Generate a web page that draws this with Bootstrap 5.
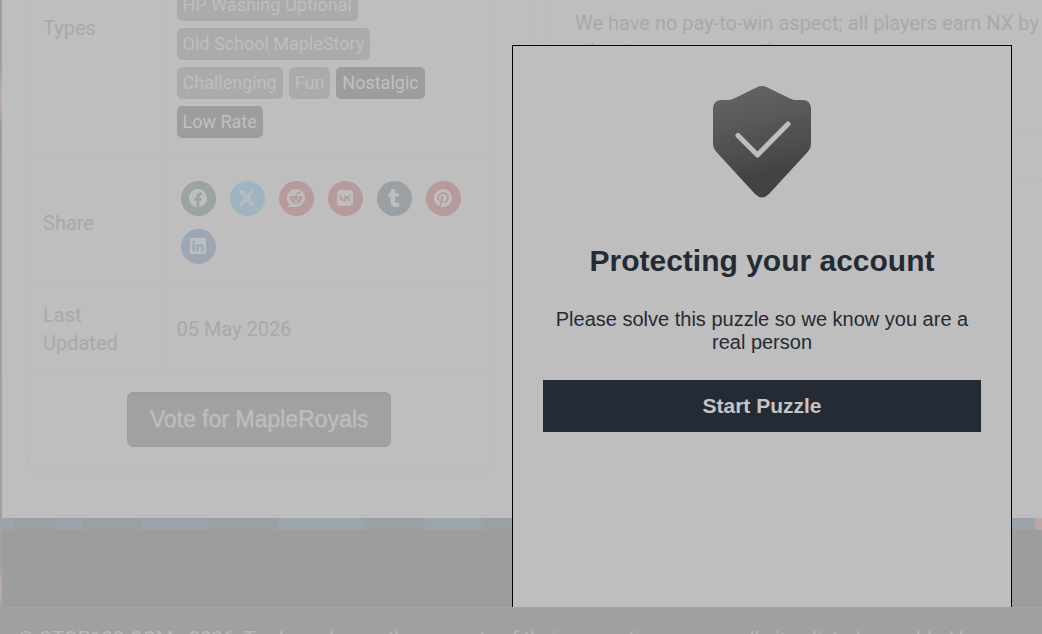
<!DOCTYPE html>
<html lang="en">
<head>
<meta charset="utf-8">
<meta name="viewport" content="width=device-width, initial-scale=1">
<title>MapleRoyals - Vote</title>
<link href="https://cdn.jsdelivr.net/npm/bootstrap@5.3.0/dist/css/bootstrap.min.css" rel="stylesheet">
<style>
body{font-family:Roboto,"Liberation Sans",sans-serif;font-size:20px;line-height:28px;color:#a9a9a9;
 background:#9ba4a8 linear-gradient(180deg,#9d9d9d 0,#9ba3a6 70px,#bba9a9 90px,#bba9a9 108px,#989fa3 125px,#9ba5a9 570px,#bba9a9 580px,#bba9a9 594px,#9ba4a8 610px)}
.shell{margin-left:2px}
.viewer{height:100vh}
.panel{background:#bebebe;padding:0 0 50px 25px}
.scrolled{margin-top:-102px}
.side{width:464px;border:1px solid #bababa;border-top:0;border-radius:0 0 8px 8px;box-shadow:0 5px 0 -1px #bebebe,0 5px 0 0 #bababa}
.facts{width:100%;border-collapse:collapse}
.facts th,.facts td{border:1px solid #bababa;border-left:0;padding:14px;font-weight:400}
.facts th{width:135px;padding-left:15px}
.facts td:last-child{border-right:0;padding-left:13px}
.facts .types > *{height:261px;border-top:0}
.facts .types td{vertical-align:bottom;padding-bottom:21px}
.tag{font-size:18px;line-height:24px;padding:4px 6px;border-radius:5px;background:#ababab;color:#bebebe;font-weight:400;text-decoration:none}
.tag-strong{background:#9d9d9d;color:#c0c0c0}
.tags{gap:7px 6px}
.share{gap:13px 14px;padding:7px 4px 8px}
.share a{width:35px;height:35px}
.share svg{width:18px;height:18px;display:block}
.vote{margin:20px 0;height:55px;width:264px;border:1px solid #9d9f9e;border-radius:6px;background:#a0a2a1;color:#bebebe;font-family:"Liberation Sans",Arial,sans-serif;font-size:23px;text-shadow:1px 1px 1px #acacac;box-shadow:inset 0 2px 0 #9b9e9d}
.about{margin-left:37px;border-left:1px solid #bababa;padding-left:19px;height:280px;border-bottom:1px solid #bababa;box-shadow:0 4px 0 -1px #bebebe,0 4px 0 0 #bababa}
.about-body{border-left:1px solid #bcbcbc;border-bottom:1px solid #bababa;padding:111px 0 0 26px;height:236px}
.strip{height:12px;background:linear-gradient(90deg,#9ba3ac 0 12px,#9aa1a3 12px 55px,#9ba3ac 55px 80px,#99a1a2 80px 140px,#9ba3ac 140px 205px,#99a1a3 205px 276px,#9aa6ac 276px 363px,#99a1a3 363px 423px,#9aa6ac 423px 481px,#99a1a3 481px 530px,#9aa4a9 530px 1032px,#bba9a9 1034px)}
.foot{background:#9d9d9d}
.notice{height:27px;background:#a0a0a0;border-top:1px solid #a4a4a4;padding:17px 16px 0;color:#b8b8b8}
.guard{position:absolute;top:45px;right:30px;bottom:27px;width:500px;border:1px solid #000;border-bottom:0;background:#bebebe;color:#242b35;font-family:"Liberation Sans",Arial,sans-serif;padding:40px 30px 0}
.guard h1{font-size:30px;line-height:36px;font-weight:700;margin:45px 0 29px}
.guard p{font-size:20px;line-height:23px;margin:0 0 26px}
.guard button{height:52px;border:0;background:#242b35;color:#c4c4c4;font-size:21px;font-weight:700}
</style>
</head>
<body>
<div class="shell viewer d-flex flex-column overflow-hidden">
<main class="panel flex-shrink-0 overflow-hidden">
 <div class="scrolled d-flex align-items-start">
  <section class="side flex-shrink-0 text-center">
   <table class="facts text-start">
    <tr class="types"><th scope="row">Types</th><td>
     <div class="tags d-flex flex-wrap">
      <a href="#" class="tag">HP Washing Optional</a><a href="#" class="tag">Old School MapleStory</a><a href="#" class="tag">Challenging</a><a href="#" class="tag">Fun</a><a href="#" class="tag tag-strong">Nostalgic</a><a href="#" class="tag tag-strong">Low Rate</a>
     </div></td></tr>
    <tr><th scope="row">Share</th><td>
     <div class="share d-flex flex-wrap">
      <a href="#" aria-label="Facebook" class="rounded-circle d-flex align-items-center justify-content-center" style="background:#9ba3a5"><svg viewBox="0 0 16 16" fill="#bebebe"><path d="M16 8.049c0-4.446-3.582-8.05-8-8.05C3.58 0-.002 3.603-.002 8.05c0 4.017 2.926 7.347 6.75 7.951v-5.625h-2.03V8.05H6.75V6.275c0-2.017 1.195-3.131 3.022-3.131.876 0 1.791.157 1.791.157v1.98h-1.009c-.993 0-1.303.621-1.303 1.258v1.51h2.218l-.354 2.326H9.25V16c3.824-.604 6.75-3.934 6.75-7.951"/></svg></a>
      <a href="#" aria-label="X" class="rounded-circle d-flex align-items-center justify-content-center" style="background:#9fb3c0"><svg viewBox="-1 -1 18 18" fill="#bebebe" stroke="#bebebe" stroke-width=".4"><path d="M12.600.75h2.454l-5.360 6.142L16 15.250h-4.937l-3.867-5.070-4.425 5.070H.316l5.733-6.570L0 .75h5.063l3.495 4.633L12.601.75Zm-.86 13.028h1.360L4.323 2.145H2.865z"/></svg></a>
      <a href="#" aria-label="Reddit" class="rounded-circle d-flex align-items-center justify-content-center" style="background:#b79a9c"><svg viewBox="0 0 18 18"><path fill="#bebebe" d="M9 0a9 9 0 1 1 0 18H1q-.7-.2-.2-.8l1.800-1.800A9 9 0 0 1 9 0Z"/><circle cx="3.900" cy="8.600" r="1.600" fill="#b79a9c"/><circle cx="14.100" cy="8.600" r="1.600" fill="#b79a9c"/><ellipse cx="9" cy="10.600" rx="5.400" ry="4.100" fill="#b79a9c"/><g fill="#bebebe"><circle cx="6.700" cy="9.600" r="1.100"/><circle cx="11.300" cy="9.600" r="1.100"/><path d="M6.500 12q2.500-.6 5 0-.6 1.700-2.500 1.700T6.500 12Z"/></g><path d="M9 6.500q.1-2.500 2.300-2.800" fill="none" stroke="#b79a9c"/><circle cx="12.200" cy="3.900" r="1.400" fill="#b79a9c"/></svg></a>
      <a href="#" aria-label="VK" class="rounded-circle d-flex align-items-center justify-content-center" style="background:#b79a9c"><svg viewBox="0 0 18 18"><rect x="1" y="1" width="16" height="16" rx="4" fill="#bebebe"/><path fill="none" stroke="#b79a9c" stroke-width="1.600" d="M4 6q.4 5.600 5.200 5.700V6M14 6q-.8 2.400-4.500 2.800 3.200.4 4.800 3.200"/></svg></a>
      <a href="#" aria-label="Tumblr" class="rounded-circle d-flex align-items-center justify-content-center" style="background:#9ba0a4"><svg viewBox="0 0 18 18" fill="#bebebe"><path d="M6.300 0H10v4.200h3.800v3.600H10V12q0 2.200 1.800 2.200 1 0 2-.4l1 3.200q-1.500 1-4.200 1-5-.1-5-4.800V7.800H3.300V4.800Q6 3.700 6.300 0Z"/></svg></a>
      <a href="#" aria-label="Pinterest" class="rounded-circle d-flex align-items-center justify-content-center" style="background:#b79a9c"><svg viewBox="0 0 16 16" fill="#bebebe"><path d="M8 0a8 8 0 0 0-2.915 15.452c-.07-.633-.134-1.606.027-2.297.146-.625.938-3.977.938-3.977s-.239-.479-.239-1.187c0-1.113.645-1.943 1.448-1.943.682 0 1.012.512 1.012 1.127 0 .686-.437 1.712-.663 2.663-.188.796.4 1.446 1.185 1.446 1.422 0 2.515-1.500 2.515-3.664 0-1.915-1.377-3.254-3.342-3.254-2.276 0-3.612 1.707-3.612 3.471 0 .688.265 1.425.595 1.826a.24.24 0 0 1 .056.230c-.061.252-.196.796-.222.907-.035.146-.116.177-.268.107-1-.465-1.624-1.926-1.624-3.100 0-2.523 1.834-4.840 5.286-4.840 2.775 0 4.932 1.977 4.932 4.620 0 2.757-1.739 4.976-4.151 4.976-.811 0-1.573-.421-1.834-.919l-.498 1.902c-.181.695-.669 1.566-.995 2.097A8 8 0 1 0 8 0"/></svg></a>
      <a href="#" aria-label="LinkedIn" class="rounded-circle d-flex align-items-center justify-content-center" style="background:#9ba8b4"><svg viewBox="-1 -1 18 18" fill="#bebebe"><path fill-rule="evenodd" d="M0 0h16v16H0ZM4.943 13.394V6.169H2.542v7.225zm-1.200-8.212c.837 0 1.358-.554 1.358-1.248-.015-.709-.520-1.248-1.342-1.248S2.400 3.226 2.400 3.934c0 .694.521 1.248 1.327 1.248zm4.908 8.212V9.359c0-.216.016-.432.080-.586.173-.431.568-.878 1.232-.878.869 0 1.216.662 1.216 1.634v3.865h2.401V9.250c0-2.220-1.184-3.252-2.764-3.252-1.274 0-1.845.700-2.165 1.193v-1.022h-2.400c.030.678 0 7.225 0 7.225z"/></svg></a>
     </div></td></tr>
    <tr><th scope="row">Last Updated</th><td>05 May 2026</td></tr>
   </table>
   <button class="vote" type="button">Vote for MapleRoyals</button>
  </section>
  <section class="about flex-grow-1"><div class="about-body">We have no pay-to-win aspect; all players earn NX by when to earn more, others</div></section>
 </div>
</main>
<div class="strip flex-shrink-0"></div>
<div class="foot flex-grow-1"></div>
<footer class="notice flex-shrink-0 text-nowrap overflow-hidden">© GTOP100.COM - 2026. Trademarks are the property of their respective owners, all sites listed are added by</footer>
</div>
<div class="guard text-center" role="dialog" aria-labelledby="guard-title">
 <svg class="d-block mx-auto" width="98" height="112" viewBox="0 0 98 112"><defs><linearGradient id="steel" x1=".4" y1="0" x2=".6" y2="1"><stop stop-color="#666264"/><stop offset=".5" stop-color="#505153"/><stop offset=".63" stop-color="#4a4b4d"/><stop offset=".78" stop-color="#434343"/></linearGradient></defs><path fill="url(#steel)" d="M44 1.200Q49-1.200 54 1.200L77 12.500Q80 14 83 14H89Q98 14 98 23V58Q98 62 95 65.500L56 108Q49 115 42 108L3 65.500Q0 62 0 58V23Q0 14 9 14H14Q18 14 21 12.500Z"/><path d="M25 49.500 44.500 69 75 38" fill="none" stroke="#bebebe" stroke-width="5" stroke-linecap="round" stroke-linejoin="round"/></svg>
 <h1 id="guard-title">Protecting your account</h1>
 <p>Please solve this puzzle so we know you are a real person</p>
 <button type="button" class="w-100">Start Puzzle</button>
</div>
<script src="https://cdn.jsdelivr.net/npm/bootstrap@5.3.0/dist/js/bootstrap.bundle.min.js"></script>
</body>
</html>
